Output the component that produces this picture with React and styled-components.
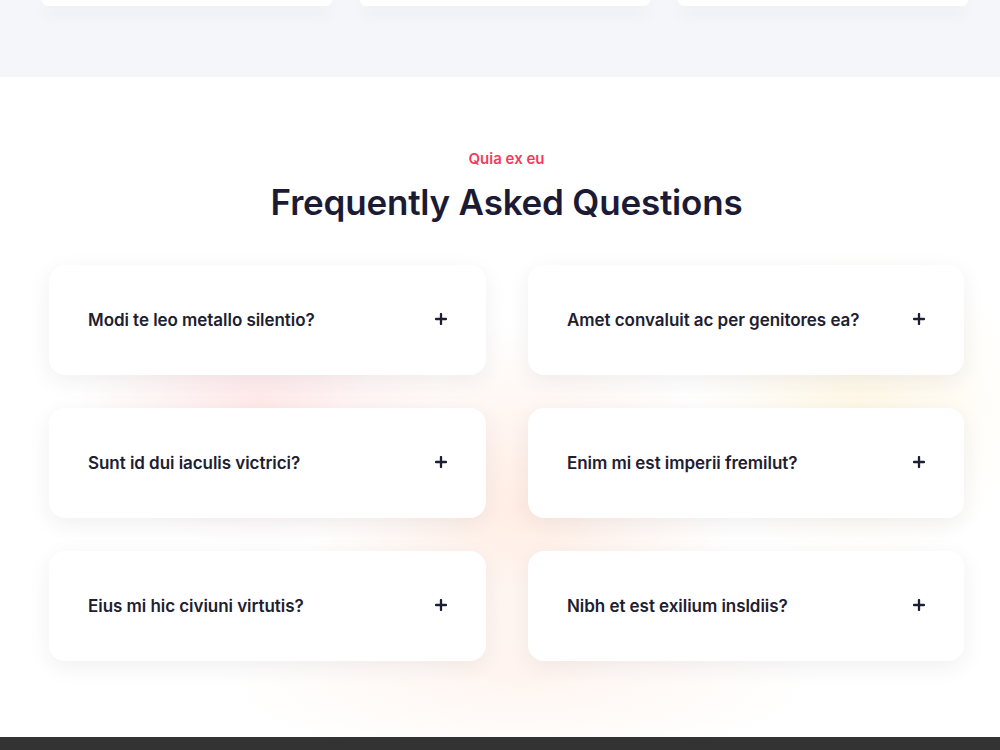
import React from 'react';
import styled, { createGlobalStyle } from 'styled-components';

const GlobalStyle = createGlobalStyle`
  html, body {
    margin: 0;
    padding: 0;
    background: #ffffff;
    font-family: Inter, "Noto Sans", "Liberation Sans", sans-serif;
  }
`;

const questions = [
  'Modi te leo metallo silentio?',
  'Amet convaluit ac per genitores ea?',
  'Sunt id dui iaculis victrici?',
  'Enim mi est imperii fremilut?',
  'Eius mi hic civiuni virtutis?',
  'Nibh et est exilium insldiis?',
];

const PlusIcon = () => (
  <svg width="12" height="12" viewBox="0 0 12 12" fill="none">
    <path d="M6 1v10M1 6h10" stroke="#1d2030" strokeWidth="2.3" strokeLinecap="round" />
  </svg>
);

const App = () => {
  return (
    <Page>
      <GlobalStyle />
      <Features>
        <FeatureRow>
          <FeatureCard />
          <FeatureCard />
          <FeatureCard />
        </FeatureRow>
      </Features>

      <FaqSection>
        <Eyebrow>Quia ex eu</Eyebrow>
        <Heading>Frequently Asked Questions</Heading>
        <FaqGrid>
          {questions.map((q, i) => (
            <FaqCard key={i}>
              <Question>{q}</Question>
              <Toggle>
                <PlusIcon />
              </Toggle>
            </FaqCard>
          ))}
        </FaqGrid>
      </FaqSection>

      <Footer />
    </Page>
  );
};

export default App;

const Page = styled.div`
  width: 1000px;
  min-height: 750px;
  overflow: hidden;
`;

const Features = styled.section`
  background: #f5f6fa;
  height: 77px;
  padding-left: 42px;
  box-sizing: border-box;
  display: flow-root;
`;

const FeatureRow = styled.div`
  display: grid;
  grid-template-columns: repeat(3, 290px);
  column-gap: 28px;
`;

/* only the rounded bottoms of the feature cards are in view */
const FeatureCard = styled.div`
  height: 6px;
  background: #fff;
  border-radius: 0 0 12px 12px;
  box-shadow: 0 8px 16px rgba(30, 35, 70, 0.06);
`;

const FaqSection = styled.section`
  height: 660px;
  box-sizing: border-box;
  padding: 72px 0 0 49px;
  display: flex;
  flex-direction: column;
  background:
    radial-gradient(ellipse 260px 200px at 260px 330px, rgba(255, 200, 200, 0.4), transparent 70%),
    radial-gradient(ellipse 300px 260px at 520px 430px, rgba(255, 212, 190, 0.42), transparent 70%),
    radial-gradient(ellipse 240px 220px at 860px 330px, rgba(255, 238, 195, 0.42), transparent 70%),
    radial-gradient(ellipse 420px 120px at 520px 600px, rgba(255, 222, 205, 0.3), transparent 70%),
    #ffffff;
`;

const Eyebrow = styled.div`
  width: 915px;
  text-align: center;
  color: #f53b5c;
  font-size: 15px;
  font-weight: 600;
  line-height: 20px;
`;

const Heading = styled.h2`
  width: 915px;
  margin: 11px 0 0;
  text-align: center;
  color: #1b1b35;
  font-size: 35px;
  font-weight: 600;
  line-height: 44px;
  letter-spacing: -0.2px;
`;

const FaqGrid = styled.div`
  width: 915px;
  margin-top: 41px;
  display: grid;
  grid-template-columns: 437px 436px;
  column-gap: 42px;
  row-gap: 33px;
`;

const FaqCard = styled.div`
  height: 110px;
  box-sizing: border-box;
  padding: 0 39px 0 39px;
  background: #ffffff;
  border-radius: 16px;
  box-shadow: 0 6px 22px rgba(40, 40, 70, 0.07);
  display: flex;
  align-items: center;
  justify-content: space-between;
`;

const Question = styled.span`
  color: #1d2030;
  font-size: 17px;
  font-weight: 600;
  letter-spacing: -0.05px;
`;

const Toggle = styled.span`
  display: flex;
  align-items: center;
  margin-top: -2px;
`;

const Footer = styled.footer`
  height: 13px;
  background: #333333;
`;
